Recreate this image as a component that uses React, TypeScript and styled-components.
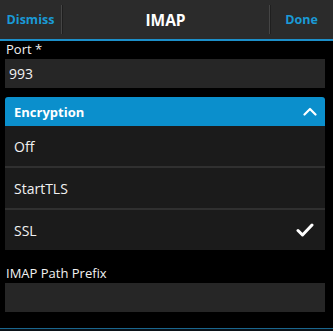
import React from "react";
import styled, { createGlobalStyle } from "styled-components";

const Global = createGlobalStyle`
  html, body {
    margin: 0;
    padding: 0;
    background: #000;
    overflow: hidden;
  }
  body {
    font-family: "Open Sans", "Noto Sans", sans-serif;
    color: #fff;
  }
`;

const options = ["Off", "StartTLS", "SSL"];

const App = () => {
  const selected = "SSL";

  return (
    <Screen>
      <Global />
      <TitleBar>
        <BarButton>Dismiss</BarButton>
        <Separator />
        <Title>IMAP</Title>
        <Separator />
        <BarButton>Done</BarButton>
      </TitleBar>

      <Content>
        <Label>Port *</Label>
        <Input>993</Input>

        <Dropdown>
          <DropdownHead>
            Encryption
            <svg width="14" height="9" viewBox="0 0 14 9">
              <path
                d="M1.5 7.5 L7 2 L12.5 7.5"
                fill="none"
                stroke="#fff"
                strokeWidth="2.2"
                strokeLinecap="round"
                strokeLinejoin="round"
              />
            </svg>
          </DropdownHead>
          {options.map((option) => (
            <Option key={option}>
              {option}
              {option === selected && (
                <svg width="18" height="14" viewBox="0 0 18 14">
                  <path
                    d="M2 7.5 L6.5 12 L16 2"
                    fill="none"
                    stroke="#fff"
                    strokeWidth="3"
                    strokeLinecap="round"
                    strokeLinejoin="round"
                  />
                </svg>
              )}
            </Option>
          ))}
        </Dropdown>

        <Label $top={15}>IMAP Path Prefix</Label>
        <Input />
      </Content>

      <BottomEdge />
    </Screen>
  );
};

export default App;

const Screen = styled.div`
  width: 333px;
  height: 331px;
  display: flex;
  flex-direction: column;
  background: #000;
`;

const TitleBar = styled.div`
  height: 39px;
  display: flex;
  align-items: center;
  background: #2b2b2b;
  border-bottom: 2px solid #1c8fc9;
`;

const BarButton = styled.div`
  width: 61px;
  flex: none;
  text-align: center;
  font-size: 12.5px;
  font-weight: 700;
  color: #1a9ad6;
  &:last-child {
    width: 63px;
  }
`;

const Separator = styled.div`
  width: 1px;
  height: 29px;
  background: #454545;
  box-shadow: 1px 0 0 #1f1f1f;
`;

const Title = styled.div`
  flex: 1;
  text-align: center;
  font-size: 15.5px;
  font-weight: 700;
  color: #fff;
`;

const Content = styled.div`
  flex: 1;
  padding: 0 8px 0 5px;
  display: flex;
  flex-direction: column;
`;

const Label = styled.div<{ $top?: number }>`
  margin-top: ${(p) => p.$top ?? 0}px;
  padding-left: 1px;
  height: 18px;
  line-height: 16px;
  font-size: 13px;
  color: #f2f2f2;
`;

const Input = styled.div`
  height: 29px;
  line-height: 29px;
  padding-left: 4px;
  background: #262626;
  font-size: 14px;
  color: #f2f2f2;
`;

const Dropdown = styled.div`
  margin-top: 9px;
  display: flex;
  flex-direction: column;
`;

const DropdownHead = styled.div`
  height: 29px;
  display: flex;
  align-items: center;
  justify-content: space-between;
  padding: 0 8px 0 9px;
  background: #0b8fcc;
  border-radius: 3px 3px 0 0;
  font-size: 13px;
  font-weight: 700;
  color: #fff;
`;

const Option = styled.div`
  height: 40px;
  display: flex;
  align-items: center;
  justify-content: space-between;
  padding: 0 11px 0 9px;
  background: #1b1b1b;
  font-size: 14px;
  color: #f2f2f2;
  & + & {
    border-top: 2px solid #303030;
  }
`;

const BottomEdge = styled.div`
  height: 2px;
  border-top: 1px solid #1a668e;
  background: #0a1218;
`;
